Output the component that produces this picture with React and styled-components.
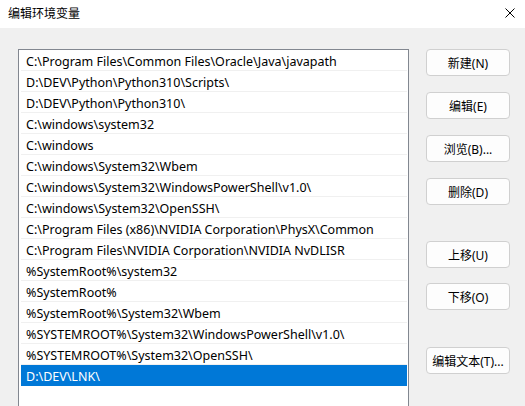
import React from "react";
import styled, { createGlobalStyle } from "styled-components";

const GlobalStyle = createGlobalStyle`
  html, body {
    margin: 0;
    padding: 0;
    background: #f0f0f0;
  }
  body {
    font-family: "Noto Sans", "Noto Sans CJK SC", sans-serif;
    font-size: 12px;
    color: #000000;
  }
  * {
    box-sizing: border-box;
  }
`;

const paths = [
  "C:\\Program Files\\Common Files\\Oracle\\Java\\javapath",
  "D:\\DEV\\Python\\Python310\\Scripts\\",
  "D:\\DEV\\Python\\Python310\\",
  "C:\\windows\\system32",
  "C:\\windows",
  "C:\\windows\\System32\\Wbem",
  "C:\\windows\\System32\\WindowsPowerShell\\v1.0\\",
  "C:\\windows\\System32\\OpenSSH\\",
  "C:\\Program Files (x86)\\NVIDIA Corporation\\PhysX\\Common",
  "C:\\Program Files\\NVIDIA Corporation\\NVIDIA NvDLISR",
  "%SystemRoot%\\system32",
  "%SystemRoot%",
  "%SystemRoot%\\System32\\Wbem",
  "%SYSTEMROOT%\\System32\\WindowsPowerShell\\v1.0\\",
  "%SYSTEMROOT%\\System32\\OpenSSH\\",
  "D:\\DEV\\LNK\\",
];

const buttons = [
  { label: "新建(N)", gap: 0 },
  { label: "编辑(E)", gap: 16 },
  { label: "浏览(B)...", gap: 16 },
  { label: "删除(D)", gap: 16 },
  { label: "上移(U)", gap: 36 },
  { label: "下移(O)", gap: 15 },
  { label: "编辑文本(T)...", gap: 37 },
];

const App = () => {
  return (
    <>
      <GlobalStyle />
      <Window>
        <TitleBar>
          <Title>编辑环境变量</Title>
          <CloseButton>
            <svg width="10" height="10" viewBox="0 0 10 10">
              <path d="M0.5 0.5 L9.5 9.5 M9.5 0.5 L0.5 9.5" stroke="#000" strokeWidth="1" />
            </svg>
          </CloseButton>
        </TitleBar>
        <Body>
          <List>
            {paths.map((path, index) => (
              <Row key={path} $selected={index === paths.length - 1}>
                {path}
              </Row>
            ))}
          </List>
          <Buttons>
            {buttons.map((button) => (
              <Button key={button.label} $gap={button.gap}>
                {button.label}
              </Button>
            ))}
          </Buttons>
        </Body>
      </Window>
    </>
  );
};

const Window = styled.div`
  width: 525px;
  height: 406px;
  overflow: hidden;
  display: flex;
  flex-direction: column;
  background: #f0f0f0;
`;

const TitleBar = styled.div`
  height: 28px;
  flex-shrink: 0;
  background: #ffffff;
  display: flex;
  align-items: center;
  justify-content: space-between;
  padding: 0 10px 0 8px;
`;

const Title = styled.div`
  font-family: "Noto Sans CJK SC", sans-serif;
  font-size: 12px;
  line-height: 16px;
  margin-top: -2px;
`;

const CloseButton = styled.div`
  width: 10px;
  height: 10px;
  display: flex;
  margin-top: -2px;
`;

const Body = styled.div`
  flex: 1;
  display: flex;
  align-items: flex-start;
  padding: 21px 0 0 18px;
`;

const List = styled.div`
  width: 391px;
  height: 400px;
  flex-shrink: 0;
  background: #ffffff;
  border: 1px solid #828790;
  border-bottom: none;
  padding: 0 1px 0 2px;
`;

const Row = styled.div`
  height: 21px;
  line-height: 19px;
  padding: 2px 0 0 5px;
  border-bottom: 1px solid ${(p) => (p.$selected ? "#0078d7" : "#f0f0f0")};
  font-size: 12.5px;
  white-space: nowrap;
  overflow: hidden;
  background: ${(p) => (p.$selected ? "#0078d7" : "transparent")};
  color: ${(p) => (p.$selected ? "#ffffff" : "#000000")};
`;

const Buttons = styled.div`
  display: flex;
  flex-direction: column;
  margin-left: 17px;
`;

const Button = styled.div`
  width: 84px;
  height: 27px;
  margin-top: ${(p) => p.$gap}px;
  border: 1px solid #d0d0d0;
  border-radius: 4px;
  background: #fdfdfd;
  display: flex;
  align-items: center;
  justify-content: center;
  font-size: 12px;
  white-space: nowrap;
`;

export default App;
